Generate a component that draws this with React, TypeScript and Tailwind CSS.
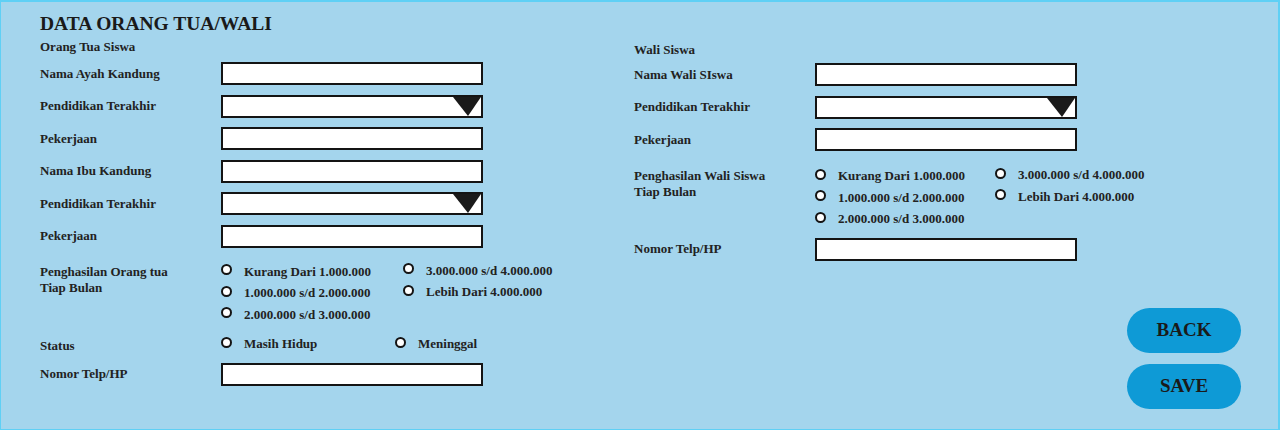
const serif = { fontFamily: '"Liberation Serif", "Times New Roman", serif' }

function TextBox() {
  return <div className="h-[23px] w-[262px] border-2 border-[#141414] bg-white" />
}

function SelectBox() {
  return (
    <div className="relative h-[23px] w-[262px] border-2 border-[#141414] bg-white">
      {/* arrow */}
      <svg className="absolute right-0 top-0" width="28" height="19" viewBox="0 0 28 19">
        <polygon points="0,0 28,0 15,19" fill="#1a1a1a" />
      </svg>
    </div>
  )
}

function Radio({ label }: { label: string }) {
  return (
    <div className="flex items-center h-[21.5px]">
      <span className="mb-[3px] h-[11px] w-[11px] shrink-0 rounded-full border-2 border-[#141414] bg-white" />
      <span className="ml-[12px] whitespace-nowrap">{label}</span>
    </div>
  )
}

function Row({ label, children }: { label: string; children: React.ReactNode }) {
  return (
    <div className="flex items-center">
      <div className="w-[181px] shrink-0">{label}</div>
      {children}
    </div>
  )
}

function Income({ label, colWidth }: { label: string; colWidth: string }) {
  return (
    <div className="flex">
      <div className="w-[181px] shrink-0 pt-[3px] leading-[16px]">
        {label}
        <br />
        Tiap Bulan
      </div>
      <div className="flex">
        <div className={colWidth}>
          <Radio label="Kurang Dari 1.000.000" />
          <Radio label="1.000.000 s/d 2.000.000" />
          <Radio label="2.000.000 s/d 3.000.000" />
        </div>
        <div className="-mt-[1px]">
          <Radio label="3.000.000 s/d 4.000.000" />
          <Radio label="Lebih Dari 4.000.000" />
        </div>
      </div>
    </div>
  )
}

export default function App() {
  return (
    <div
      className="w-[1280px] h-[430px] flex bg-[#a4d5ed] text-[#222] text-[13px] font-bold border-t-2 border-r-2 border-l border-b border-[#5fd0f5]"
      style={serif}
    >
      {/* Orang tua */}
      <div className="w-[633px] shrink-0 pl-[39px] pt-[10px]">
        <h1 className="text-[19.5px] leading-[24px] font-bold text-[#1a1a1a]">DATA ORANG TUA/WALI</h1>
        <div className="mt-[3px] leading-[16px]">Orang Tua Siswa</div>
        <div className="mt-[7px] flex flex-col gap-[9.5px]">
          <Row label="Nama Ayah Kandung"><TextBox /></Row>
          <Row label="Pendidikan Terakhir"><SelectBox /></Row>
          <Row label="Pekerjaan"><TextBox /></Row>
          <Row label="Nama Ibu Kandung"><TextBox /></Row>
          <Row label="Pendidikan Terakhir"><SelectBox /></Row>
          <Row label="Pekerjaan"><TextBox /></Row>
        </div>
        <div className="mt-[13px]">
          <Income label="Penghasilan Orang tua" colWidth="w-[182px]" />
        </div>
        <div className="mt-[7px] flex items-center">
          <div className="w-[181px] shrink-0 pt-[4px]">Status</div>
          <div className="w-[174px]"><Radio label="Masih Hidup" /></div>
          <Radio label="Meninggal" />
        </div>
        <div className="mt-[7px]">
          <Row label="Nomor Telp/HP"><TextBox /></Row>
        </div>
      </div>

      {/* Wali */}
      <div className="flex-1 flex flex-col pt-[40px] pr-[37px]">
        <div className="leading-[16px]">Wali Siswa</div>
        <div className="mt-[5px] flex flex-col gap-[9.5px]">
          <Row label="Nama Wali SIswa"><TextBox /></Row>
          <Row label="Pendidikan Terakhir"><SelectBox /></Row>
          <Row label="Pekerjaan"><TextBox /></Row>
        </div>
        <div className="mt-[14px]">
          <Income label="Penghasilan Wali Siswa" colWidth="w-[180px]" />
        </div>
        <div className="mt-[8px]">
          <Row label="Nomor Telp/HP"><TextBox /></Row>
        </div>

        <div className="mt-auto mb-[20px] flex flex-col items-end gap-[11px]">
          <button className="h-[45px] w-[114px] rounded-full bg-[#0e9ad6] text-[19px] font-bold text-[#1a1a1a]">
            BACK
          </button>
          <button className="h-[45px] w-[114px] rounded-full bg-[#0e9ad6] text-[19px] font-bold text-[#1a1a1a]">
            SAVE
          </button>
        </div>
      </div>
    </div>
  )
}
